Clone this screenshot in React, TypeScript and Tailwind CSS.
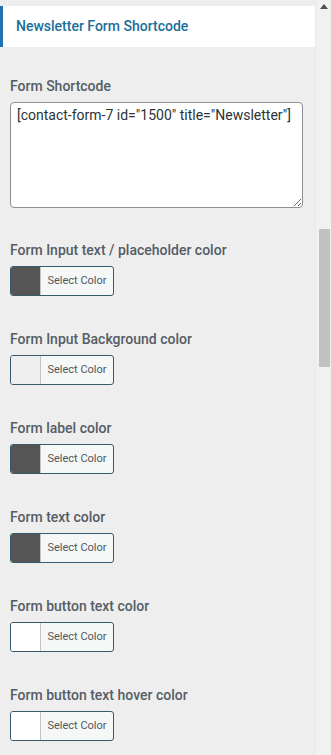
const pickers = [
  { label: "Form Input text / placeholder color", color: "#555555" },
  { label: "Form Input Background color", color: "#eeeeee" },
  { label: "Form label color", color: "#555555" },
  { label: "Form text color", color: "#555555" },
  { label: "Form button text color", color: "#ffffff" },
  { label: "Form button text hover color", color: "#ffffff" },
];

function ColorButton({ color }: { color: string }) {
  return (
    <button
      type="button"
      className="flex h-[30px] w-[104px] overflow-hidden rounded-[3px] border border-[#35596d] bg-[#f6f7f7]"
    >
      <span className="h-full w-[30px] border-r border-[#c3c4c7]" style={{ backgroundColor: color }} />
      <span className="flex flex-1 items-center justify-center text-[11px] text-[#50575e]">
        Select Color
      </span>
    </button>
  );
}

export default function App() {
  return (
    <div className="flex h-[755px] w-[331px] overflow-hidden bg-[#eeeeee] font-['Roboto',sans-serif]">
      <div className="flex w-[315px] flex-col pt-[6px]">
        {/* section title */}
        <div className="flex h-[41px] items-center border-l-[3px] border-[#2271b1] bg-white pl-[13px]">
          <h3 className="text-[14px] font-medium text-[#1b6f98]">Newsletter Form Shortcode</h3>
        </div>

        <div className="flex flex-col px-[10px] pt-[29px]">
          <label className="text-[14px] font-medium leading-5 text-[#555d66]">Form Shortcode</label>
          <textarea
            className="mt-[6px] h-[106px] w-[293px] resize-y rounded-[4px] border border-[#8c8f94] bg-white px-[6px] pt-[2px] text-[14px] leading-5 text-[#2c3338] outline-none"
            defaultValue={'[contact-form-7 id="1500" title="Newsletter"]'}
          />

          <div className="flex flex-col gap-[33px] pt-[32px]">
            {pickers.map((p) => (
              <div key={p.label} className="flex flex-col gap-[6px]">
                <span className="text-[14px] font-medium leading-5 text-[#555d66]">{p.label}</span>
                <ColorButton color={p.color} />
              </div>
            ))}
          </div>
        </div>
      </div>

      {/* scrollbar */}
      <div className="flex w-[16px] flex-col items-center border-l border-[#e9e9e9] bg-[#f1f1f1]">
        <svg width="8" height="5" viewBox="0 0 8 5" className="mt-[4px]">
          <path d="M4 0 L8 5 L0 5 Z" fill="#505050" />
        </svg>
        <div className="ml-[1px] mt-[220px] h-[138px] w-[11px] bg-[#c1c1c1]" />
      </div>
    </div>
  );
}
